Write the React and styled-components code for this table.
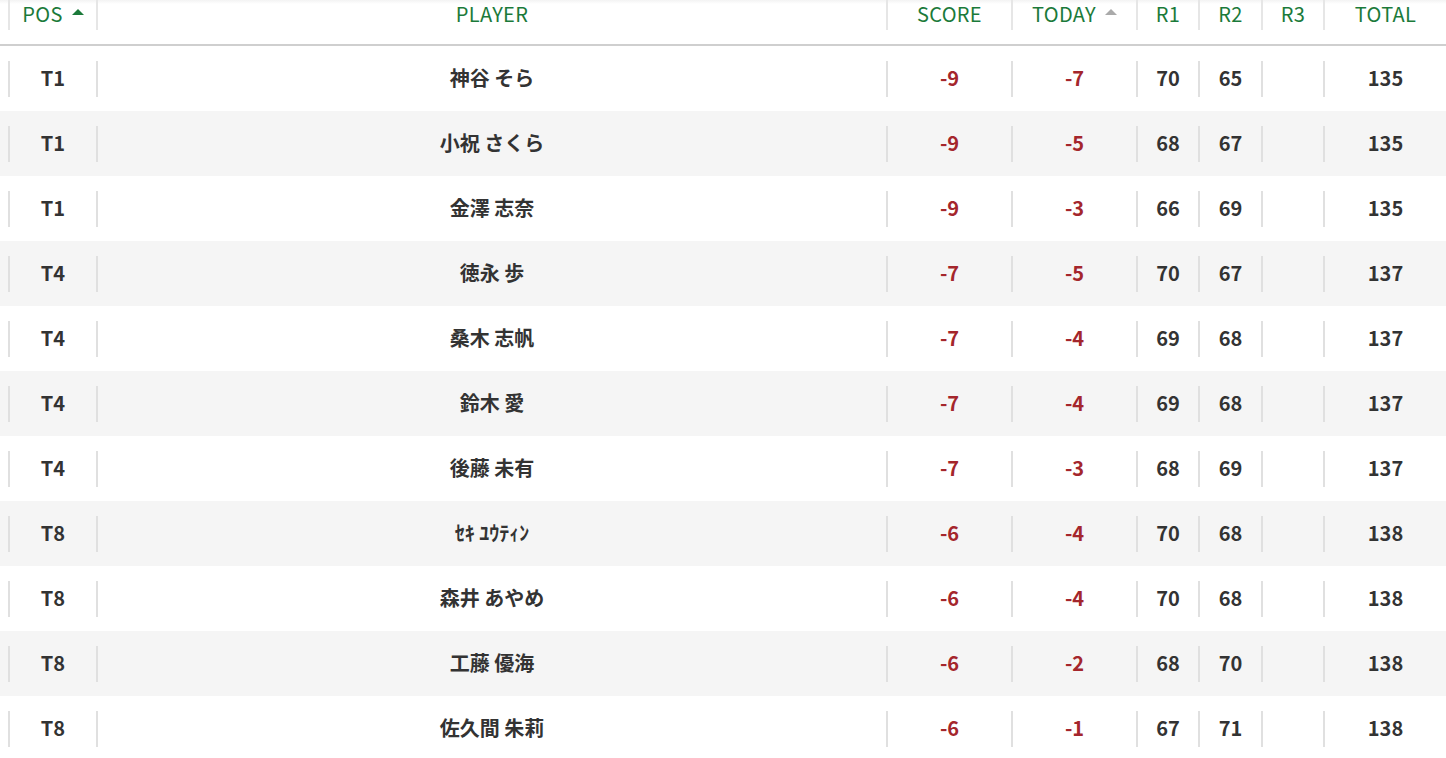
import React from 'react';
import styled, { createGlobalStyle } from 'styled-components';

const GlobalStyle = createGlobalStyle`
  html, body {
    margin: 0;
    padding: 0;
    background: #fff;
    font-family: "Noto Sans CJK JP", "Noto Sans", sans-serif;
  }
`;

const COLS = '88px 790px 125px 125px 62px 63px 62px 1fr';

const Table = styled.div`
  width: 1446px;
`;

const HeadRow = styled.div`
  display: grid;
  grid-template-columns: ${COLS};
  padding-left: 8px;
  height: 44px;
  border-bottom: 2px solid #cfcfcf;
  background: linear-gradient(#f3f3f3, #fff 4px);
`;

const HeadCell = styled.div`
  height: 30px;
  box-sizing: border-box;
  padding-bottom: 3px;
  display: flex;
  align-items: center;
  justify-content: center;
  gap: 9px;
  border-left: 2px solid #e6e6e6;
  color: #1b7a3a;
  font-size: 20px;
  font-weight: 400;
  letter-spacing: 0.3px;
`;

const SortArrow = styled.span`
  width: 0;
  height: 0;
  border-left: 6px solid transparent;
  border-right: 6px solid transparent;
  border-bottom: 6px solid ${p => (p.$active ? '#1b7a3a' : '#aaaaaa')};
  margin-top: -4px;
`;

const Row = styled.div`
  display: grid;
  grid-template-columns: ${COLS};
  padding-left: 8px;
  height: 65px;
  align-items: center;
  background: ${p => (p.$striped ? '#f5f5f5' : '#fff')};
`;

const Cell = styled.div`
  height: 36px;
  box-sizing: border-box;
  padding-bottom: 2px;
  display: flex;
  align-items: center;
  justify-content: center;
  border-left: 2px solid #e0e0e0;
  color: ${p => (p.$under ? '#a4262c' : '#333')};
  font-size: 20px;
  font-weight: 700;
`;

const players = [
  ['T1', '神谷 そら', '-9', '-7', 70, 65, 135],
  ['T1', '小祝 さくら', '-9', '-5', 68, 67, 135],
  ['T1', '金澤 志奈', '-9', '-3', 66, 69, 135],
  ['T4', '徳永 歩', '-7', '-5', 70, 67, 137],
  ['T4', '桑木 志帆', '-7', '-4', 69, 68, 137],
  ['T4', '鈴木 愛', '-7', '-4', 69, 68, 137],
  ['T4', '後藤 未有', '-7', '-3', 68, 69, 137],
  ['T8', 'ｾｷ ﾕｳﾃｨﾝ', '-6', '-4', 70, 68, 138],
  ['T8', '森井 あやめ', '-6', '-4', 70, 68, 138],
  ['T8', '工藤 優海', '-6', '-2', 68, 70, 138],
  ['T8', '佐久間 朱莉', '-6', '-1', 67, 71, 138],
];

export default function App() {
  return (
    <>
      <GlobalStyle />
      <Table>
        <HeadRow>
          <HeadCell>POS <SortArrow $active /></HeadCell>
          <HeadCell>PLAYER</HeadCell>
          <HeadCell>SCORE</HeadCell>
          <HeadCell>TODAY <SortArrow /></HeadCell>
          <HeadCell>R1</HeadCell>
          <HeadCell>R2</HeadCell>
          <HeadCell>R3</HeadCell>
          <HeadCell>TOTAL</HeadCell>
        </HeadRow>
        {players.map((p, i) => (
          <Row key={i} $striped={i % 2 === 1}>
            <Cell>{p[0]}</Cell>
            <Cell>{p[1]}</Cell>
            <Cell $under>{p[2]}</Cell>
            <Cell $under>{p[3]}</Cell>
            <Cell>{p[4]}</Cell>
            <Cell>{p[5]}</Cell>
            <Cell />
            <Cell>{p[6]}</Cell>
          </Row>
        ))}
      </Table>
    </>
  );
}
